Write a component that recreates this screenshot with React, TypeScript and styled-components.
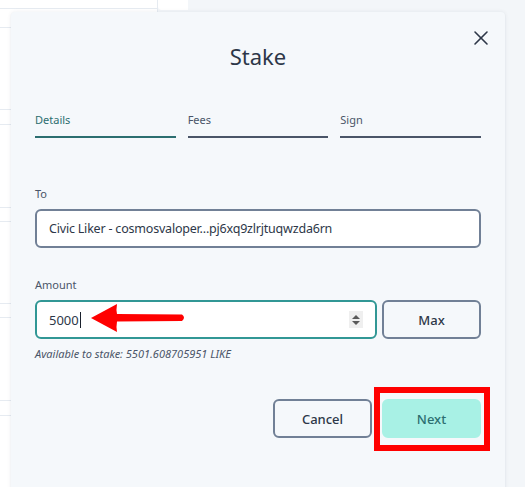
import React from "react";
import styled, { createGlobalStyle } from "styled-components";
import { X } from "lucide-react";

const GlobalStyle = createGlobalStyle`
  html, body {
    margin: 0;
    padding: 0;
    background: #f3f6f9;
  }
  body {
    font-family: "Noto Sans", "Open Sans", sans-serif;
    color: #2d3748;
  }
`;

const Page = styled.div`
  position: relative;
  width: 525px;
  height: 487px;
  overflow: hidden;
  display: flex;
  background: #f3f6f9;
`;

const SideTable = styled.div`
  width: 157px;
  background: #ffffff;
  display: flex;
  flex-direction: column;
  border-right: 1px solid #e6ebf1;
`;

const SideRow = styled.div<{ $h: number }>`
  height: ${(p) => p.$h}px;
  border-bottom: 1px solid #e6ebf1;
  box-sizing: border-box;
`;

const SideColumn = styled.div`
  width: 30px;
  height: 10px;
  background: #ffffff;
  border-bottom-left-radius: 4px;
`;

const Modal = styled.div`
  position: absolute;
  left: 11px;
  top: 12px;
  width: 494px;
  height: 500px;
  box-sizing: border-box;
  padding: 0 24px;
  background: #f5f8fb;
  border-radius: 4px;
  box-shadow: 0 0 4px rgba(30, 40, 60, 0.08), 0 1px 2px rgba(30, 40, 60, 0.06);
  display: flex;
  flex-direction: column;
`;

const CloseButton = styled.button`
  position: absolute;
  top: 12px;
  right: 10px;
  width: 28px;
  height: 28px;
  padding: 0;
  border: none;
  background: transparent;
  color: #2d3748;
  display: flex;
  align-items: center;
  justify-content: center;
`;

const Title = styled.h2`
  margin: 30px 0 0;
  font-size: 22px;
  line-height: 28px;
  font-weight: 400;
  text-align: center;
  color: #2d3748;
`;

const Tabs = styled.div`
  margin-top: 42px;
  display: grid;
  grid-template-columns: 1fr 1fr 1fr;
  gap: 12px;
`;

const Tab = styled.div<{ $active?: boolean }>`
  font-size: 11px;
  line-height: 16px;
  color: ${(p) => (p.$active ? "#2c6e70" : "#4a5568")};
  padding-bottom: 8px;
  border-bottom: 2px solid ${(p) => (p.$active ? "#2c6e70" : "#4a5568")};
`;

const Label = styled.div<{ $top: number }>`
  margin-top: ${(p) => p.$top}px;
  font-size: 11px;
  line-height: 16px;
  color: #4a5568;
`;

const Field = styled.div<{ $focused?: boolean; $grow?: boolean }>`
  box-sizing: border-box;
  height: 39px;
  margin-top: 7px;
  padding: 0 12px;
  border: 2px solid ${(p) => (p.$focused ? "#319795" : "#718096")};
  border-radius: 6px;
  background: #ffffff;
  display: flex;
  align-items: center;
  font-size: 13px;
  color: #2d3748;
  flex: ${(p) => (p.$grow ? "1" : "none")};
`;

const FieldText = styled.span`
  font-size: 12.5px;
  letter-spacing: -0.2px;
`;

const AmountRow = styled.div`
  display: flex;
  gap: 5px;
  align-items: flex-end;
`;

const Caret = styled.span`
  display: inline-block;
  width: 1px;
  height: 16px;
  background: #1a202c;
  margin-left: 1px;
`;

const Spinner = styled.div`
  margin-left: auto;
  width: 14px;
  height: 17px;
  background: #efefef;
  display: flex;
  flex-direction: column;
  align-items: center;
  justify-content: center;
  gap: 2px;
`;

const Tri = styled.span<{ $up?: boolean }>`
  width: 0;
  height: 0;
  border-left: 4px solid transparent;
  border-right: 4px solid transparent;
  ${(p) =>
    p.$up ? "border-bottom: 4px solid #5a5a5a;" : "border-top: 4px solid #5a5a5a;"}
`;

const Button = styled.button<{ $primary?: boolean }>`
  box-sizing: border-box;
  width: 99px;
  height: 39px;
  flex: none;
  border-radius: 6px;
  font-family: "Noto Sans", "Open Sans", sans-serif;
  font-size: 13px;
  font-weight: 500;
  border: 2px solid ${(p) => (p.$primary ? "#a8f1e5" : "#718096")};
  background: ${(p) => (p.$primary ? "#a8f1e5" : "#f5f8fb")};
  color: ${(p) => (p.$primary ? "#2c6e70" : "#2d3748")};
`;

const Hint = styled.div`
  margin-top: 7px;
  font-size: 11px;
  line-height: 15px;
  font-style: italic;
  color: #4a5568;
`;

const Footer = styled.div`
  margin-top: 38px;
  display: flex;
  justify-content: flex-end;
  gap: 10px;
`;

const Highlight = styled.div`
  position: absolute;
  left: 374px;
  top: 387px;
  width: 116px;
  height: 64px;
  box-sizing: border-box;
  border: 6px solid #ff0000;
  pointer-events: none;
`;

const Arrow = styled.svg`
  position: absolute;
  left: 88px;
  top: 302px;
  pointer-events: none;
`;

export default function App() {
  return (
    <Page>
      <GlobalStyle />
      <SideTable>
        <SideRow $h={9} />
        <SideRow $h={19} />
        <SideRow $h={82} />
        <SideRow $h={15} />
        <SideRow $h={83} />
        <SideRow $h={14} />
        <SideRow $h={82} />
        <SideRow $h={14} />
        <SideRow $h={83} />
        <SideRow $h={15} />
      </SideTable>
      <SideColumn />
      <Modal>
        <CloseButton aria-label="Close">
          <X size={24} strokeWidth={1.6} />
        </CloseButton>
        <Title>Stake</Title>
        <Tabs>
          <Tab $active>Details</Tab>
          <Tab>Fees</Tab>
          <Tab>Sign</Tab>
        </Tabs>
        <Label $top={48}>To</Label>
        <Field>
          <FieldText>Civic Liker - cosmosvaloper...pj6xq9zlrjtuqwzda6rn</FieldText>
        </Field>
        <Label $top={29}>Amount</Label>
        <AmountRow>
          <Field $focused $grow>
            5000
            <Caret />
            <Spinner>
              <Tri $up />
              <Tri />
            </Spinner>
          </Field>
          <Button>Max</Button>
        </AmountRow>
        <Hint>Available to stake: 5501.608705951 LIKE</Hint>
        <Footer>
          <Button>Cancel</Button>
          <Button $primary>Next</Button>
        </Footer>
      </Modal>
      <Arrow width="100" height="32" viewBox="0 0 100 32">
        <path
          d="M3 16 Q16 9 29 2 Q28 8 29 12 L94 12.5 Q98 15.5 94 19 L29 19.5 Q28 25 29 30 Q16 23 3 16 Z"
          fill="#ff0000"
        />
      </Arrow>
      <Highlight />
    </Page>
  );
}
